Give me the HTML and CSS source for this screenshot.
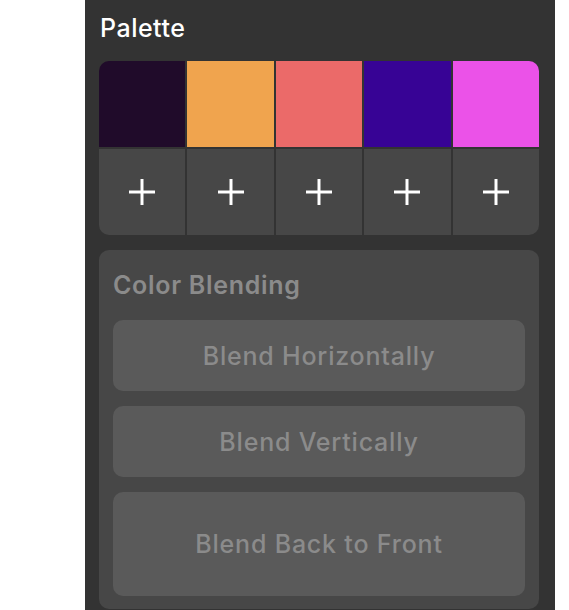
FILE: index.html
```html
<!DOCTYPE html>
<html>
<head>
<meta charset="utf-8">
<link rel="stylesheet" href="styles.css">
</head>
<body>
<div class="panel">
  <h2 class="title">Palette</h2>
  <div class="palette">
    <div class="swatch s1"></div>
    <div class="swatch s2"></div>
    <div class="swatch s3"></div>
    <div class="swatch s4"></div>
    <div class="swatch s5"></div>
    <div class="add"><svg viewBox="0 0 26 26" width="26" height="26"><path d="M13 0V26M0 13H26" stroke="#fff" stroke-width="3"/></svg></div>
    <div class="add"><svg viewBox="0 0 26 26" width="26" height="26"><path d="M13 0V26M0 13H26" stroke="#fff" stroke-width="3"/></svg></div>
    <div class="add"><svg viewBox="0 0 26 26" width="26" height="26"><path d="M13 0V26M0 13H26" stroke="#fff" stroke-width="3"/></svg></div>
    <div class="add"><svg viewBox="0 0 26 26" width="26" height="26"><path d="M13 0V26M0 13H26" stroke="#fff" stroke-width="3"/></svg></div>
    <div class="add"><svg viewBox="0 0 26 26" width="26" height="26"><path d="M13 0V26M0 13H26" stroke="#fff" stroke-width="3"/></svg></div>
  </div>
  <div class="card">
    <h3 class="card-title">Color Blending</h3>
    <div class="buttons">
      <button class="btn">Blend Horizontally</button>
      <button class="btn">Blend Vertically</button>
      <button class="btn tall">Blend Back to Front</button>
    </div>
  </div>
</div>
</body>
</html>
```
FILE: styles.css
```css
html, body {
  margin: 0;
  padding: 0;
  background: #ffffff;
  height: 610px;
  overflow: hidden;
}
body {
  font-family: Inter, "Noto Sans", sans-serif;
}
.panel {
  margin-left: 85px;
  width: 470px;
  height: 610px;
  box-sizing: border-box;
  background: #333333;
  padding: 12px 16px 0 14px;
}
.title {
  margin: 0;
  font-size: 25px;
  line-height: 32px;
  font-weight: 500;
  letter-spacing: 0.5px;
  color: #ffffff;
  height: 49px;
  padding-left: 1px;
}
.palette {
  display: grid;
  grid-template-columns: repeat(5, 1fr);
  grid-template-rows: 86px 86px;
  gap: 2px;
  border-radius: 10px;
  overflow: hidden;
}
.s1 { background: #200b2a; }
.s2 { background: #f0a44e; }
.s3 { background: #eb6a69; }
.s4 { background: #370395; }
.s5 { background: #eb52e8; }
.add {
  background: #474747;
  display: flex;
  align-items: center;
  justify-content: center;
}
.card {
  margin-top: 15px;
  background: #474747;
  border-radius: 10px;
  padding: 20px 14px 13px 14px;
}
.card-title {
  margin: 0;
  font-size: 25px;
  line-height: 30px;
  font-weight: 600;
  letter-spacing: 0.7px;
  color: #8b8b8b;
  height: 50px;
}
.buttons {
  display: flex;
  flex-direction: column;
  gap: 15px;
}
.btn {
  height: 71px;
  border: none;
  border-radius: 10px;
  background: #5a5a5a;
  color: #8b8b8b;
  font-family: Inter, "Noto Sans", sans-serif;
  font-size: 25px;
  font-weight: 500;
  letter-spacing: 0.8px;
  padding: 0;
}
.btn.tall {
  height: 104px;
}
```
